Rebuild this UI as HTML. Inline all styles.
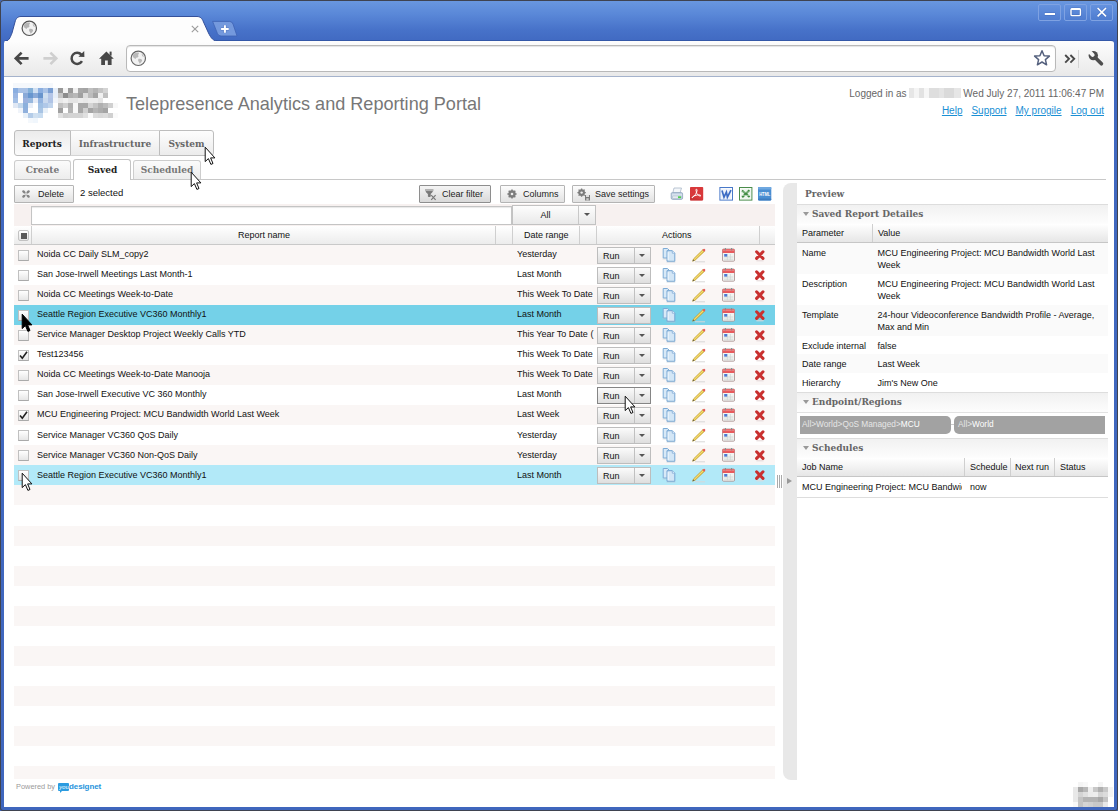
<!DOCTYPE html>
<html><head><meta charset="utf-8"><title>Telepresence Analytics and Reporting Portal</title>
<style>
*{box-sizing:border-box;margin:0;padding:0}
html,body{width:1118px;height:811px;overflow:hidden;background:#3f66bd}
body{position:relative;font:9px "Liberation Sans",sans-serif;color:#111}
#frame *{position:absolute}
#frame svg *{position:static}
#frame{position:absolute;left:0;top:0;width:1118px;height:811px;border-radius:4px 4px 3px 3px;
 background:linear-gradient(#6a98e0 0,#5a88d8 14px,#4772c9 30px,#4069c1 42px,#3f66bd 100%);
 box-shadow:inset 0 0 0 1px #3f4350;overflow:hidden}
#white{left:4px;top:77px;width:1110px;height:730px;background:#fff}
#page{left:0;top:0;width:1118px;height:811px}
#tb{left:4px;top:40px;width:1110px;height:37px;background:linear-gradient(#fdfdfd,#e9e9e9);border-bottom:1px solid #a5b3cc;border-top:1px solid #3458a8;border-radius:3px 3px 0 0}
#tab{left:4px;top:16px;width:214px;height:26px}
#omni{left:122px;top:4px;width:930px;height:27px;border:1px solid #b9b9b9;border-radius:4px;background:#fff;box-shadow:inset 0 1px 1px #e4e4e4}
.wb{top:4px;width:23px;height:17px;border:1px solid #7fa2e2;border-radius:2px;background:linear-gradient(#6592de,#4f7cd0)}
/* header */
#title{left:126px;top:94px;font-size:18.1px;line-height:21px;color:#777;white-space:nowrap}
#login{right:14px;top:88px;font-size:10px;line-height:12px;color:#666;white-space:nowrap}
#links{right:14px;top:105px;font-size:10px;line-height:12px;white-space:nowrap}
#links a{position:static;color:#1a8fd4;text-decoration:underline;margin-left:9px}
.blur{position:static!important;display:inline-block;width:52px;height:10px;background:linear-gradient(90deg,#e6e6e6 0 5px,#f4f4f4 5px 10px,#e2e2e2 10px 15px,#f6f6f6 15px 20px,#dedede 20px 30px,#e4e4e4 30px 35px,#dadada 35px 45px,#e6e6e6 45px 52px);vertical-align:-1px;margin:0 2px 0 0}
/* tabs */
.mt{top:130px;height:26px;border:1px solid #bdbdbd;background:linear-gradient(#fdfdfd,#ececec);font:bold 10px "DejaVu Serif Condensed","DejaVu Serif","Liberation Serif",serif;color:#666;text-align:center;line-height:25px}
.st{top:160px;height:20px;border:1px solid #cdcdcd;border-bottom:0;background:linear-gradient(#fbfbfb,#ececec);font:bold 10px "DejaVu Serif Condensed","DejaVu Serif","Liberation Serif",serif;color:#777;text-align:center;line-height:18px;border-radius:3px 3px 0 0}
#hr{left:14px;top:179px;width:1092px;height:1px;background:#c8c8c8}
.btn{top:185px;height:18px;border:1px solid #b4b4b4;background:linear-gradient(#fcfcfc,#e2e2e2);font-size:9px;line-height:16px;color:#222;white-space:nowrap;border-radius:1px}
/* grid */
#filter{left:14px;top:204px;width:761px;height:22px;background:#f7f1f0}
#finput{left:31px;top:206px;width:481px;height:19px;background:#fff;border:1px solid #c4c4c4;box-shadow:inset 0 1px 1px #e8e8e8}
#fsel{left:512px;top:205px;width:84px;height:20px;border:1px solid #c2c2c2;background:linear-gradient(#fdfdfd,#e9e9e9);text-align:center;line-height:19px;padding-right:17px}
#ghead{left:14px;top:226px;width:761px;height:19px;background:linear-gradient(#fff,#ececec);border-bottom:1px solid #c9c9c9}
#ghead span{top:0;line-height:18px;white-space:nowrap}
#ghead i{top:0;width:1px;height:18px;background:#cfcfcf}
.r{left:14px;width:761px;height:20px;background:#fff}
.r.o{background:#faf6f5}
.r.h1{background:#74d1e8}
.r.h2{background:#b2e9f8}
.cb{left:4px;top:5px;width:11px;height:11px;border:1px solid #c0c0c0;border-bottom-color:#aaa;background:linear-gradient(#fff,#e6e6e6)}
.cb svg{left:-1px;top:-1px;width:11px;height:11px}
.nm{left:23px;top:0;line-height:19px;white-space:nowrap}
.dr{left:503px;top:0;line-height:19px;white-space:nowrap;width:77px;overflow:hidden}
.run{left:583px;top:2px;width:54px;height:17px;border:1px solid #bdbdbd;background:linear-gradient(#fbfbfb,#dedede);}
.run.hv{border-color:#858585}
.run b{font-weight:normal;left:5px;top:0;line-height:16px}
.run u{left:36px;top:0;width:1px;height:15px;background:#c0c0c0}
.run u:after{content:"";position:absolute;left:5px;top:6px;border:3px solid transparent;border-top:3.5px solid #555;border-bottom:0}
.ic{top:3px}
/* panel */
#pbar{left:783px;top:183px;width:13.5px;height:597px;background:#e8e8e8;border-radius:8px 0 0 8px}
#panel{left:797px;top:183px;width:309px;height:597px;background:#fff}
#panel{left:797px;top:183px;width:311px;height:597px;background:#fff}
#ptitle{left:805px;top:187px;font:bold 10px "DejaVu Serif Condensed","Liberation Serif",serif;color:#666;line-height:14px}
.sh{left:797px;width:311px;height:21px;border-top:1px solid #ddd;border-bottom:1px solid #e2e2e2;background:linear-gradient(#f1f1f1,#fdfdfd);font:bold 10px "DejaVu Serif Condensed","Liberation Serif",serif;color:#666;line-height:18px;padding-left:15px;white-space:nowrap}
.sh:before{content:"";position:absolute;left:6px;top:7px;border:3px solid transparent;border-top:4.5px solid #999;border-bottom:0}
.th{left:797px;width:311px;height:19px;background:linear-gradient(#fff,#e6e6e6);border-bottom:1px solid #c6c6c6}
.th span{top:0;line-height:18px;white-space:nowrap}
.th i{top:0;width:1px;height:18px;background:#cfcfcf}
.pr{left:797px;width:311px;background:#fff;line-height:12px}
.pr.g{background:#fafafa}
.pr span{top:3.5px;white-space:nowrap}
.pr span.k{left:5px}
.pr span.v{left:80.5px}
.pill{top:416px;height:18px;background:#a2a2a2;color:#e6e6e6;line-height:17px;font-size:8.3px;white-space:nowrap;padding-left:2px}
.pill b{position:static!important;font-weight:normal;color:#fff}

</style></head><body>
<div id="frame">
 <div class="wb" style="left:1038px"><svg width="21" height="15" viewBox="0 0 21 15" style="left:0;top:0"><path d="M5.6 9 H16.2" stroke="#3558a6" stroke-width="3.4" opacity=".35"/><path d="M5.8 9 H16" stroke="#fff" stroke-width="2"/></svg></div>
 <div class="wb" style="left:1064px"><svg width="21" height="15" viewBox="0 0 21 15" style="left:0;top:0"><rect x="6" y="3.6" width="9.4" height="7" rx="1.2" fill="none" stroke="#3558a6" stroke-width="2.8" opacity=".3"/><rect x="6" y="3.6" width="9.4" height="7" rx="1.2" fill="none" stroke="#fff" stroke-width="1.4"/><path d="M6 4.2 H15.4" stroke="#fff" stroke-width="1.6"/></svg></div>
 <div class="wb" style="left:1090px"><svg width="21" height="15" viewBox="0 0 21 15" style="left:0;top:0"><path d="M6.6 3 L15 11.4 M15 3 L6.6 11.4" stroke="#3558a6" stroke-width="3" opacity=".3"/><path d="M6.6 3 L15 11.4 M15 3 L6.6 11.4" stroke="#fff" stroke-width="1.6"/></svg></div>
 <svg class="abs" style="left:211px;top:20px" width="28" height="17" viewBox="0 0 28 17"><path d="M1.6 1.4 H18.5 Q21 1.4 22 4 L26 16 H10 Q7.4 16 6.4 13.4 Z" fill="#7499dd" stroke="#3f63b4" stroke-width="0.8"/><path d="M13.9 5 V13 M9.9 9 H17.9" stroke="#3a5ca8" stroke-width="3" opacity=".5"/><path d="M13.9 5.2 V12.8 M10.1 9 H17.7" stroke="#fff" stroke-width="2"/></svg>
 <div id="tb"><div id="omni"></div></div>
 <svg id="tab" viewBox="0 0 214 26"><path d="M0 26 C5 25 6 22 8 17 L11 6 C12 2 14 0.5 17 0.5 L193 0.5 C196 .5 198 2 199.5 6 L204.5 17 C207 22 209 25 214.5 25.5 L214.5 26 Z" fill="#fdfdfd" stroke="#34509a" stroke-width="1"/><rect x="0.5" y="25" width="214" height="2" fill="#fdfdfd"/></svg>
 <svg class="abs" style="left:191px;top:25px" width="8" height="8" viewBox="0 0 8 8"><path d="M0.8 0.8 L7.2 7.2 M7.2 0.8 L0.8 7.2" stroke="#9c9c9c" stroke-width="1.1"/></svg>
 <svg class="abs globe" style="left:21px;top:20px" width="17" height="17" viewBox="0 0 17 17"><circle cx="8.3" cy="8.3" r="7.2" fill="#f2f2f2" stroke="#555" stroke-width="1.2"/><path d="M4 3.6 Q6 2.4 8.6 2.6 Q9.6 4 8 5 Q9.4 6.4 7.6 7.6 Q6 7.4 5.6 9 Q3.6 8.6 2.6 6.6 Q2.8 4.6 4 3.6 Z M8.6 8.8 Q10.8 8.4 12.2 10 Q11.8 12.6 9.6 13.8 Q9.2 12 8.2 11 Q7.8 9.6 8.6 8.8 Z M11.6 3.6 Q13.4 4.8 14 6.8 Q12.6 7 12 5.6 Z" fill="#b4b4b4"/></svg>
 <svg class="abs globe" style="left:130px;top:50px" width="17" height="17" viewBox="0 0 17 17"><circle cx="8.3" cy="8.3" r="7.2" fill="#f2f2f2" stroke="#666" stroke-width="1.2"/><path d="M4 3.6 Q6 2.4 8.6 2.6 Q9.6 4 8 5 Q9.4 6.4 7.6 7.6 Q6 7.4 5.6 9 Q3.6 8.6 2.6 6.6 Q2.8 4.6 4 3.6 Z M8.6 8.8 Q10.8 8.4 12.2 10 Q11.8 12.6 9.6 13.8 Q9.2 12 8.2 11 Q7.8 9.6 8.6 8.8 Z M11.6 3.6 Q13.4 4.8 14 6.8 Q12.6 7 12 5.6 Z" fill="#b9b9b9"/></svg>
 <svg class="abs" style="left:14px;top:51px" width="16" height="15" viewBox="0 0 16 15"><path d="M7.6 1.6 L1.8 7.4 L7.6 13.2 M2.4 7.4 H14.6" fill="none" stroke="#484848" stroke-width="2.6" stroke-linejoin="miter"/></svg>
 <svg class="abs" style="left:42px;top:51px" width="16" height="15" viewBox="0 0 16 15"><path d="M8.4 1.6 L14.2 7.4 L8.4 13.2 M13.6 7.4 H1.4" fill="none" stroke="#cfcfcf" stroke-width="2.6"/></svg>
 <svg class="abs" style="left:69px;top:50px" width="17" height="17" viewBox="0 0 17 17"><path d="M13 11.2 A5.6 5.6 0 1 1 12.4 4.6" fill="none" stroke="#484848" stroke-width="2.5"/><path d="M9.4 6.8 L15.4 7 L15.2 1 Z" fill="#484848"/></svg>
 <svg class="abs" style="left:98px;top:50px" width="17" height="16" viewBox="0 0 17 16"><path d="M8.4 1.4 L1 8.8 H3.2 V15 H7 V10.4 H9.8 V15 H13.6 V8.8 H15.8 Z" fill="#484848"/><rect x="11.6" y="1.6" width="2" height="4" fill="#484848"/></svg>
 <svg class="abs" style="left:1033px;top:49px" width="18" height="18" viewBox="0 0 18 18"><path d="M9 1.8 L11.1 6.7 L16.4 7.1 L12.4 10.6 L13.6 15.8 L9 13 L4.4 15.8 L5.6 10.6 L1.6 7.1 L6.9 6.7 Z" fill="#fff" stroke="#55617e" stroke-width="1.5" stroke-linejoin="round"/></svg>
 <svg class="abs" style="left:1064px;top:54px" width="12" height="10" viewBox="0 0 12 10"><path d="M1.2 1 L5 4.8 L1.2 8.6 M6.4 1 L10.2 4.8 L6.4 8.6" fill="none" stroke="#484848" stroke-width="1.9"/></svg>
 <div class="abs" style="left:1078px;top:50px;width:1px;height:18px;background:#d4d4d4"></div>
 <svg class="abs" style="left:1086px;top:50px" width="19" height="18" viewBox="0 0 19 18"><path d="M15.4 13.8 L8.6 7" stroke="#4e4e4e" stroke-width="3.7" stroke-linecap="round"/><circle cx="7.3" cy="5.6" r="4.7" fill="#4e4e4e"/><path d="M-1 -3 L6.6 4.9" stroke="#f7f7f7" stroke-width="3.8" stroke-linecap="round"/></svg>
 <div id="white"></div>

<div id="page">
<svg class="abs" style="left:13px;top:83px" width="105" height="40" viewBox="0 0 105 40" shape-rendering="crispEdges"><rect x="0" y="0" width="5" height="5" fill="#f5f8fc"/><rect x="5" y="0" width="5" height="5" fill="#f5f8fc"/><rect x="10" y="0" width="5" height="5" fill="#f5f8fc"/><rect x="15" y="0" width="5" height="5" fill="#f5f8fc"/><rect x="20" y="0" width="5" height="5" fill="#f5f8fc"/><rect x="25" y="0" width="5" height="5" fill="#f5f8fc"/><rect x="30" y="0" width="5" height="5" fill="#f5f8fc"/><rect x="35" y="0" width="5" height="5" fill="#f5f8fc"/><rect x="0" y="5" width="5" height="5" fill="#8aaee0"/><rect x="5" y="5" width="5" height="5" fill="#a9c2e6"/><rect x="10" y="5" width="5" height="5" fill="#a9c2e6"/><rect x="15" y="5" width="5" height="5" fill="#84b0d8"/><rect x="20" y="5" width="5" height="5" fill="#cfdff2"/><rect x="25" y="5" width="5" height="5" fill="#8aaee0"/><rect x="30" y="5" width="5" height="5" fill="#a9c2e6"/><rect x="35" y="5" width="5" height="5" fill="#7a9fd3"/><rect x="40" y="5" width="5" height="5" fill="#e6eef8"/><rect x="45" y="5" width="5" height="5" fill="#989898"/><rect x="50" y="5" width="5" height="5" fill="#f4f4f4"/><rect x="55" y="5" width="5" height="5" fill="#9a9a9a"/><rect x="60" y="5" width="5" height="5" fill="#f0f0f0"/><rect x="65" y="5" width="5" height="5" fill="#a8a8a8"/><rect x="70" y="5" width="5" height="5" fill="#a4a4a4"/><rect x="75" y="5" width="5" height="5" fill="#c0c0c0"/><rect x="80" y="5" width="5" height="5" fill="#b4b4b4"/><rect x="85" y="5" width="5" height="5" fill="#c4c4c4"/><rect x="90" y="5" width="5" height="5" fill="#d4d4d4"/><rect x="0" y="10" width="5" height="5" fill="#9ab6e2"/><rect x="10" y="10" width="5" height="5" fill="#8aaad8"/><rect x="15" y="10" width="5" height="5" fill="#6896cf"/><rect x="20" y="10" width="5" height="5" fill="#8aaad8"/><rect x="25" y="10" width="5" height="5" fill="#6894cc"/><rect x="30" y="10" width="5" height="5" fill="#cfdff0"/><rect x="35" y="10" width="5" height="5" fill="#b4c6e8"/><rect x="40" y="10" width="5" height="5" fill="#e6eef8"/><rect x="45" y="10" width="5" height="5" fill="#c4c4c4"/><rect x="50" y="10" width="5" height="5" fill="#8c8c8c"/><rect x="55" y="10" width="5" height="5" fill="#b0b0b0"/><rect x="60" y="10" width="5" height="5" fill="#b8b8b8"/><rect x="65" y="10" width="5" height="5" fill="#a0a0a0"/><rect x="70" y="10" width="5" height="5" fill="#dcdcdc"/><rect x="75" y="10" width="5" height="5" fill="#bcbcbc"/><rect x="80" y="10" width="5" height="5" fill="#a4a4a4"/><rect x="85" y="10" width="5" height="5" fill="#f0f0f0"/><rect x="90" y="10" width="5" height="5" fill="#c0c0c0"/><rect x="0" y="15" width="5" height="5" fill="#a4c0e6"/><rect x="10" y="15" width="5" height="5" fill="#9cb2de"/><rect x="15" y="15" width="5" height="5" fill="#98b8de"/><rect x="20" y="15" width="5" height="5" fill="#e4eaf6"/><rect x="25" y="15" width="5" height="5" fill="#94b4e0"/><rect x="30" y="15" width="5" height="5" fill="#c8d8ee"/><rect x="35" y="15" width="5" height="5" fill="#b0c4e6"/><rect x="40" y="15" width="5" height="5" fill="#f0f4fa"/><rect x="45" y="15" width="5" height="5" fill="#e8e8e8"/><rect x="50" y="15" width="5" height="5" fill="#f0f0f0"/><rect x="55" y="15" width="5" height="5" fill="#e4e4e4"/><rect x="60" y="15" width="5" height="5" fill="#e4e4e4"/><rect x="65" y="15" width="5" height="5" fill="#ececec"/><rect x="70" y="15" width="5" height="5" fill="#e8e8e8"/><rect x="75" y="15" width="5" height="5" fill="#ececec"/><rect x="80" y="15" width="5" height="5" fill="#ececec"/><rect x="85" y="15" width="5" height="5" fill="#e4e4e4"/><rect x="0" y="20" width="5" height="5" fill="#e0e8f4"/><rect x="5" y="20" width="5" height="5" fill="#c4d8ec"/><rect x="10" y="20" width="5" height="5" fill="#8cb0dc"/><rect x="15" y="20" width="5" height="5" fill="#e8eef8"/><rect x="25" y="20" width="5" height="5" fill="#a0c0e4"/><rect x="30" y="20" width="5" height="5" fill="#b0c8e8"/><rect x="35" y="20" width="5" height="5" fill="#c0d4ec"/><rect x="45" y="20" width="5" height="5" fill="#c0c0c0"/><rect x="50" y="20" width="5" height="5" fill="#d0d0d0"/><rect x="55" y="20" width="5" height="5" fill="#b0b0b0"/><rect x="60" y="20" width="5" height="5" fill="#f8f8f8"/><rect x="65" y="20" width="5" height="5" fill="#a8a8a8"/><rect x="70" y="20" width="5" height="5" fill="#a8a8a8"/><rect x="75" y="20" width="5" height="5" fill="#d4d4d4"/><rect x="80" y="20" width="5" height="5" fill="#c4c4c4"/><rect x="85" y="20" width="5" height="5" fill="#b0b0b0"/><rect x="90" y="20" width="5" height="5" fill="#bcbcbc"/><rect x="95" y="20" width="5" height="5" fill="#d0d0d0"/><rect x="100" y="20" width="5" height="5" fill="#f8f8f8"/><rect x="5" y="25" width="5" height="5" fill="#f0f4fa"/><rect x="10" y="25" width="5" height="5" fill="#90b0dc"/><rect x="25" y="25" width="5" height="5" fill="#a8c4e4"/><rect x="30" y="25" width="5" height="5" fill="#e8f0f8"/><rect x="45" y="25" width="5" height="5" fill="#a0a0a0"/><rect x="55" y="25" width="5" height="5" fill="#b4b4b4"/><rect x="60" y="25" width="5" height="5" fill="#f8f8f8"/><rect x="65" y="25" width="5" height="5" fill="#a8a8a8"/><rect x="70" y="25" width="5" height="5" fill="#d0d0d0"/><rect x="75" y="25" width="5" height="5" fill="#a4a4a4"/><rect x="80" y="25" width="5" height="5" fill="#b4b4b4"/><rect x="85" y="25" width="5" height="5" fill="#acacac"/><rect x="90" y="25" width="5" height="5" fill="#a4a4a4"/><rect x="10" y="30" width="5" height="5" fill="#e8f0f8"/><rect x="15" y="30" width="5" height="5" fill="#b4cce8"/><rect x="20" y="30" width="5" height="5" fill="#d0e0f0"/><rect x="25" y="30" width="5" height="5" fill="#c8dcf0"/><rect x="45" y="30" width="5" height="5" fill="#e0e0e0"/><rect x="50" y="30" width="5" height="5" fill="#d0d0d0"/><rect x="55" y="30" width="5" height="5" fill="#d4d4d4"/><rect x="60" y="30" width="5" height="5" fill="#d4d4d4"/><rect x="65" y="30" width="5" height="5" fill="#d4d4d4"/><rect x="70" y="30" width="5" height="5" fill="#e0e0e0"/><rect x="75" y="30" width="5" height="5" fill="#fafafa"/><rect x="80" y="30" width="5" height="5" fill="#dcdcdc"/><rect x="85" y="30" width="5" height="5" fill="#d8d8d8"/><rect x="90" y="30" width="5" height="5" fill="#dcdcdc"/><rect x="95" y="30" width="5" height="5" fill="#d0d0d0"/><rect x="100" y="30" width="5" height="5" fill="#fafafa"/><rect x="15" y="35" width="5" height="5" fill="#f4f8fc"/><rect x="20" y="35" width="5" height="5" fill="#f0f6fc"/></svg>
<div id="title">Telepresence Analytics and Reporting Portal</div>
<div id="login">Logged in as <span class="blur"></span>Wed July 27, 2011 11:06:47 PM</div>
<div id="links"><a>Help</a><a>Support</a><a>My progile</a><a>Log out</a></div>
<div class="mt" style="left:14px;width:57px;border-radius:3px 0 0 3px;color:#222;background:linear-gradient(#ebebeb,#fbfbfb);text-indent:-1px">Reports</div>
<div class="mt" style="left:71px;width:88px;border-left:0;border-right:0;border-color:#d4d4d4">Infrastructure</div>
<div class="mt" style="left:159px;width:55px;border-radius:0 3px 3px 0">System</div>
<div class="st" style="left:14px;width:57px">Create</div>
<div class="st" style="left:133px;width:68px">Scheduled</div>
<div id="hr"></div>
<div class="st" style="left:73px;width:58px;height:21px;background:#fff;color:#222;padding-left:1px;top:159px;line-height:20px;border-color:#c4c4c4">Saved</div>
<div class="btn" style="left:14px;width:60px;padding-left:23px">Delete</div>
<div class="abs" style="left:80px;top:187px;line-height:11px;font-size:9.5px">2 selected</div>
<div class="btn" style="left:419px;width:72px;padding-left:22px;border-color:#8e8e8e;background:linear-gradient(#f4f4f4,#d9d9d9)">Clear filter</div>
<div class="btn" style="left:500px;width:65px;padding-left:22px">Columns</div>
<div class="btn" style="left:572px;width:83px;padding-left:22px">Save settings</div>
<div id="filter"></div><div id="finput"></div><div id="fsel">All</div>
<div id="ghead"><span style="left:224px">Report name</span><span style="left:510px">Date range</span><span style="left:648px">Actions</span>
<i style="left:17px"></i><i style="left:481px"></i><i style="left:498px"></i><i style="left:565px"></i><i style="left:582px"></i><i style="left:745px"></i></div>
<svg class="abs" style="left:424px;top:189px" width="14" height="12" viewBox="0 0 14 12"><path d="M1 1 H9.5 M2 2.6 H8.5 L6.2 5 V7.5 H4.4 V5 Z" fill="#787878" stroke="#787878" stroke-width="1"/><path d="M7.2 6.2 L11.6 10.8 M11.6 6.2 L7.2 10.8" stroke="#787878" stroke-width="1.2"/></svg>
<svg class="abs" style="left:507px;top:189px" width="10" height="10" viewBox="0 0 10 10"><circle cx="5" cy="5" r="2.7" fill="none" stroke="#7c7c7c" stroke-width="2"/><path d="M5 0.4 V9.6 M0.4 5 H9.6 M1.7 1.7 L8.3 8.3 M8.3 1.7 L1.7 8.3" stroke="#7c7c7c" stroke-width="1.5"/><circle cx="5" cy="5" r="1.3" fill="#eee"/></svg>
<svg class="abs" style="left:577px;top:188px" width="14" height="13" viewBox="0 0 14 13"><circle cx="4.6" cy="4.6" r="2.5" fill="none" stroke="#7c7c7c" stroke-width="1.8"/><path d="M4.6 0.4 V8.8 M0.4 4.6 H8.8 M1.6 1.6 L7.6 7.6 M7.6 1.6 L1.6 7.6" stroke="#7c7c7c" stroke-width="1.3"/><circle cx="4.6" cy="4.6" r="1.2" fill="#eee"/><rect x="8" y="7" width="5" height="5.5" fill="#7a7a7a"/><rect x="9" y="7" width="3" height="2" fill="#ddd"/><rect x="9.3" y="10.2" width="2.4" height="2.3" fill="#ccc"/></svg>
<svg class="abs" style="left:670px;top:187px" width="14" height="14" viewBox="0 0 14 14"><path d="M4 1 H11.5 L10 6 H2.8 Z" fill="#f4f7fa" stroke="#aab8c8" stroke-width="0.8"/><path d="M1.2 6.6 Q1.2 5.6 2.4 5.6 H11.2 Q12.6 5.6 12.6 6.8 V11 Q12.6 12.4 11.2 12.4 H2.6 Q1.2 12.4 1.2 11 Z" fill="#c3d3e4" stroke="#8ea4bc" stroke-width="0.8"/><path d="M2 8 H12" stroke="#e8eff6" stroke-width="1"/><rect x="2.4" y="9" width="9" height="2.4" rx="0.6" fill="#e9eef3" stroke="#9fb0c2" stroke-width="0.5"/><rect x="8" y="9.3" width="3" height="1.8" fill="#4fd04f"/></svg>
<svg class="abs" style="left:690px;top:187px" width="14" height="14" viewBox="0 0 14 14"><rect x="0" y="0" width="13.2" height="13.4" rx="0.8" fill="#d8383a"/><path d="M0 9 L13.2 13.4 H0 Z" fill="#c22f31" opacity=".6"/><path d="M6.3 2.2 Q7.4 2 7 4 Q6.4 7.2 2.6 10.6 Q1.6 11.4 2.2 10.2 Q3.4 8.6 7.2 8 Q10.8 7.6 10.9 8.6 Q10.6 9.6 8.8 8.6 Q6.4 7 6 3.4 Q5.9 2.3 6.3 2.2" fill="none" stroke="#fff" stroke-width="0.9"/></svg>
<svg class="abs" style="left:719px;top:187px" width="15" height="14" viewBox="0 0 15 14"><rect x="0.9" y="0.5" width="12.6" height="12.6" fill="#fff" stroke="#4878c8" stroke-width="1"/><rect x="2" y="1.6" width="10.4" height="10.4" fill="#eef3fb"/><path d="M3 3.6 L5 10.2 L7.4 5.2 L8.4 10.2 L12 3.2" fill="none" stroke="#3c6cc4" stroke-width="1.7"/></svg>
<svg class="abs" style="left:739px;top:187px" width="14" height="14" viewBox="0 0 14 14"><rect x="0.5" y="0.5" width="12.4" height="12.6" fill="#fff" stroke="#4a8c4a" stroke-width="1"/><rect x="1.6" y="1.6" width="10.2" height="10.4" fill="#eef6ee"/><path d="M3 3.4 L10.6 10 M10.4 3.2 L3.2 10.2" fill="none" stroke="#3e8a40" stroke-width="2"/><path d="M2.4 5 H11.2 M2.4 8.4 H11.2" stroke="#cfe4cf" stroke-width="0.7"/></svg>
<svg class="abs" style="left:758px;top:187px" width="14" height="14" viewBox="0 0 14 14"><rect x="0" y="0" width="13.3" height="13.4" rx="0.8" fill="#4a8ed2"/><rect x="0" y="0" width="13.3" height="2.4" rx="0.8" fill="#6fa8e0"/><rect x="0" y="11.4" width="13.3" height="2" rx="0.8" fill="#3d7cc0"/><text x="6.65" y="8.9" font-family="Liberation Sans, sans-serif" font-size="4.6" font-weight="bold" fill="#fff" text-anchor="middle" textLength="11" lengthAdjust="spacingAndGlyphs">HTML</text></svg>
<svg class="abs" style="left:21.5px;top:189.5px" width="8" height="8" viewBox="0 0 8 8"><path d="M1.4 1.4 L6.6 6.6 M6.6 1.4 L1.4 6.6" stroke="#848484" stroke-width="2.3" stroke-linecap="round"/><path d="M4 0.4 V7.6 M0.4 4 H7.6" stroke="#ececec" stroke-width="0.9"/></svg>
<div class="abs" style="left:18px;top:230px;width:11px;height:11px;border:1px solid #c2c2c2;border-radius:2px;background:linear-gradient(#fff,#e4e4e4)"></div><div class="abs" style="left:20.5px;top:232.5px;width:6px;height:6px;background:#585858"></div>
<div class="abs" style="left:578px;top:206px;width:1px;height:18px;background:#c8c8c8"></div><div class="abs" style="left:583.5px;top:213px;border:3px solid transparent;border-top:3.5px solid #555;border-bottom:0"></div>

<div id="grid">
<div class="r o" style="top:245px;height:20px"><i class="cb"></i><span class="nm">Noida CC Daily SLM_copy2</span><span class="dr">Yesterday</span><span class="run"><b>Run</b><u></u></span><svg class="ic" style="left:648px;top:3px" width="14" height="15" viewBox="0 0 14 15"><path d="M1.2 0.5 H5.5 L7.2 2.2 V10 H1.2 Z" fill="#d8e9f7" stroke="#7dabd6" stroke-width="1"/><path d="M5 2.7 H10.3 L12.8 5.2 V13.3 H5 Z" fill="#d3e6f6" stroke="#74a4d2" stroke-width="1"/><path d="M10.3 2.7 V5.2 H12.8" fill="#f2f8fd" stroke="#74a4d2" stroke-width="0.7"/><path d="M6.2 4.2 V12" stroke="#f2f8fd" stroke-width="1"/><path d="M0.5 10.9 H4.4 M4.6 14.1 H13.2" stroke="#b9c7d4" stroke-width="0.8" opacity=".7"/></svg><svg class="ic" style="left:678px;top:3px" width="15" height="15" viewBox="0 0 15 15"><path d="M3 13.8 H13" stroke="#d8d8d8" stroke-width="1"/><path d="M0.6 13.2 L1.5 10.9 L11 1.6 L12.6 3.2 L3 12.3 Z" fill="#ecc94a" stroke="#b8982e" stroke-width="0.7"/><path d="M2.3 11.4 L11.6 2.3" stroke="#f8e690" stroke-width="0.7"/><path d="M10.5 2.1 L11.5 1.1 Q12.3 0.5 13 1.2 Q13.7 2 13.1 2.7 L12.1 3.7 Z" fill="#e45a5a"/><path d="M0.6 13.2 L1.3 11.4 L2.4 12.5 Z" fill="#555"/></svg><svg class="ic" style="left:708px;top:3px" width="14" height="15" viewBox="0 0 14 15"><rect x="0.5" y="1" width="12" height="12.2" rx="1" fill="#f1f3f1" stroke="#a58a8a" stroke-width="0.8"/><path d="M0.5 5 V2 Q0.5 1 1.5 1 H11.5 Q12.5 1 12.5 2 V5 Z" fill="#e85a5c"/><path d="M1 2.2 H12" stroke="#f59a9a" stroke-width="0.8"/><path d="M3.4 0 V2.6 M9.6 0 V2.6" stroke="#8c8c8c" stroke-width="1.1"/><path d="M2 9 H11.2 M2 11.2 H11.2 M5.4 6 V12.4 M8.4 6 V12.4" stroke="#cfd8d4" stroke-width="0.8"/><rect x="2.2" y="6" width="3" height="2.6" fill="#4c7ad6"/></svg><svg class="ic" style="left:740px;top:3px" width="12" height="15" viewBox="0 0 12 15"><path d="M2.4 12.8 H9.6" stroke="#e4d6d6" stroke-width="1"/><path d="M2.6 3.8 L9 10.4 M9 3.8 L2.6 10.4" stroke="#c9302f" stroke-width="3" stroke-linecap="round"/></svg></div>
<div class="r" style="top:265px;height:20px"><i class="cb"></i><span class="nm">San Jose-Irwell Meetings Last Month-1</span><span class="dr">Last Month</span><span class="run"><b>Run</b><u></u></span><svg class="ic" style="left:648px;top:3px" width="14" height="15" viewBox="0 0 14 15"><path d="M1.2 0.5 H5.5 L7.2 2.2 V10 H1.2 Z" fill="#d8e9f7" stroke="#7dabd6" stroke-width="1"/><path d="M5 2.7 H10.3 L12.8 5.2 V13.3 H5 Z" fill="#d3e6f6" stroke="#74a4d2" stroke-width="1"/><path d="M10.3 2.7 V5.2 H12.8" fill="#f2f8fd" stroke="#74a4d2" stroke-width="0.7"/><path d="M6.2 4.2 V12" stroke="#f2f8fd" stroke-width="1"/><path d="M0.5 10.9 H4.4 M4.6 14.1 H13.2" stroke="#b9c7d4" stroke-width="0.8" opacity=".7"/></svg><svg class="ic" style="left:678px;top:3px" width="15" height="15" viewBox="0 0 15 15"><path d="M3 13.8 H13" stroke="#d8d8d8" stroke-width="1"/><path d="M0.6 13.2 L1.5 10.9 L11 1.6 L12.6 3.2 L3 12.3 Z" fill="#ecc94a" stroke="#b8982e" stroke-width="0.7"/><path d="M2.3 11.4 L11.6 2.3" stroke="#f8e690" stroke-width="0.7"/><path d="M10.5 2.1 L11.5 1.1 Q12.3 0.5 13 1.2 Q13.7 2 13.1 2.7 L12.1 3.7 Z" fill="#e45a5a"/><path d="M0.6 13.2 L1.3 11.4 L2.4 12.5 Z" fill="#555"/></svg><svg class="ic" style="left:708px;top:3px" width="14" height="15" viewBox="0 0 14 15"><rect x="0.5" y="1" width="12" height="12.2" rx="1" fill="#f1f3f1" stroke="#a58a8a" stroke-width="0.8"/><path d="M0.5 5 V2 Q0.5 1 1.5 1 H11.5 Q12.5 1 12.5 2 V5 Z" fill="#e85a5c"/><path d="M1 2.2 H12" stroke="#f59a9a" stroke-width="0.8"/><path d="M3.4 0 V2.6 M9.6 0 V2.6" stroke="#8c8c8c" stroke-width="1.1"/><path d="M2 9 H11.2 M2 11.2 H11.2 M5.4 6 V12.4 M8.4 6 V12.4" stroke="#cfd8d4" stroke-width="0.8"/><rect x="2.2" y="6" width="3" height="2.6" fill="#4c7ad6"/></svg><svg class="ic" style="left:740px;top:3px" width="12" height="15" viewBox="0 0 12 15"><path d="M2.4 12.8 H9.6" stroke="#e4d6d6" stroke-width="1"/><path d="M2.6 3.8 L9 10.4 M9 3.8 L2.6 10.4" stroke="#c9302f" stroke-width="3" stroke-linecap="round"/></svg></div>
<div class="r o" style="top:285px;height:20px"><i class="cb"></i><span class="nm">Noida CC Meetings Week-to-Date</span><span class="dr">This Week To Date</span><span class="run"><b>Run</b><u></u></span><svg class="ic" style="left:648px;top:3px" width="14" height="15" viewBox="0 0 14 15"><path d="M1.2 0.5 H5.5 L7.2 2.2 V10 H1.2 Z" fill="#d8e9f7" stroke="#7dabd6" stroke-width="1"/><path d="M5 2.7 H10.3 L12.8 5.2 V13.3 H5 Z" fill="#d3e6f6" stroke="#74a4d2" stroke-width="1"/><path d="M10.3 2.7 V5.2 H12.8" fill="#f2f8fd" stroke="#74a4d2" stroke-width="0.7"/><path d="M6.2 4.2 V12" stroke="#f2f8fd" stroke-width="1"/><path d="M0.5 10.9 H4.4 M4.6 14.1 H13.2" stroke="#b9c7d4" stroke-width="0.8" opacity=".7"/></svg><svg class="ic" style="left:678px;top:3px" width="15" height="15" viewBox="0 0 15 15"><path d="M3 13.8 H13" stroke="#d8d8d8" stroke-width="1"/><path d="M0.6 13.2 L1.5 10.9 L11 1.6 L12.6 3.2 L3 12.3 Z" fill="#ecc94a" stroke="#b8982e" stroke-width="0.7"/><path d="M2.3 11.4 L11.6 2.3" stroke="#f8e690" stroke-width="0.7"/><path d="M10.5 2.1 L11.5 1.1 Q12.3 0.5 13 1.2 Q13.7 2 13.1 2.7 L12.1 3.7 Z" fill="#e45a5a"/><path d="M0.6 13.2 L1.3 11.4 L2.4 12.5 Z" fill="#555"/></svg><svg class="ic" style="left:708px;top:3px" width="14" height="15" viewBox="0 0 14 15"><rect x="0.5" y="1" width="12" height="12.2" rx="1" fill="#f1f3f1" stroke="#a58a8a" stroke-width="0.8"/><path d="M0.5 5 V2 Q0.5 1 1.5 1 H11.5 Q12.5 1 12.5 2 V5 Z" fill="#e85a5c"/><path d="M1 2.2 H12" stroke="#f59a9a" stroke-width="0.8"/><path d="M3.4 0 V2.6 M9.6 0 V2.6" stroke="#8c8c8c" stroke-width="1.1"/><path d="M2 9 H11.2 M2 11.2 H11.2 M5.4 6 V12.4 M8.4 6 V12.4" stroke="#cfd8d4" stroke-width="0.8"/><rect x="2.2" y="6" width="3" height="2.6" fill="#4c7ad6"/></svg><svg class="ic" style="left:740px;top:3px" width="12" height="15" viewBox="0 0 12 15"><path d="M2.4 12.8 H9.6" stroke="#e4d6d6" stroke-width="1"/><path d="M2.6 3.8 L9 10.4 M9 3.8 L2.6 10.4" stroke="#c9302f" stroke-width="3" stroke-linecap="round"/></svg></div>
<div class="r h1" style="top:305px;height:20px"><i class="cb"></i><span class="nm">Seattle Region Executive VC360 Monthly1</span><span class="dr">Last Month</span><span class="run"><b>Run</b><u></u></span><svg class="ic" style="left:648px;top:3px" width="14" height="15" viewBox="0 0 14 15"><path d="M1.2 0.5 H5.5 L7.2 2.2 V10 H1.2 Z" fill="#d8e9f7" stroke="#7dabd6" stroke-width="1"/><path d="M5 2.7 H10.3 L12.8 5.2 V13.3 H5 Z" fill="#d3e6f6" stroke="#74a4d2" stroke-width="1"/><path d="M10.3 2.7 V5.2 H12.8" fill="#f2f8fd" stroke="#74a4d2" stroke-width="0.7"/><path d="M6.2 4.2 V12" stroke="#f2f8fd" stroke-width="1"/><path d="M0.5 10.9 H4.4 M4.6 14.1 H13.2" stroke="#b9c7d4" stroke-width="0.8" opacity=".7"/></svg><svg class="ic" style="left:678px;top:3px" width="15" height="15" viewBox="0 0 15 15"><path d="M3 13.8 H13" stroke="#d8d8d8" stroke-width="1"/><path d="M0.6 13.2 L1.5 10.9 L11 1.6 L12.6 3.2 L3 12.3 Z" fill="#ecc94a" stroke="#b8982e" stroke-width="0.7"/><path d="M2.3 11.4 L11.6 2.3" stroke="#f8e690" stroke-width="0.7"/><path d="M10.5 2.1 L11.5 1.1 Q12.3 0.5 13 1.2 Q13.7 2 13.1 2.7 L12.1 3.7 Z" fill="#e45a5a"/><path d="M0.6 13.2 L1.3 11.4 L2.4 12.5 Z" fill="#555"/></svg><svg class="ic" style="left:708px;top:3px" width="14" height="15" viewBox="0 0 14 15"><rect x="0.5" y="1" width="12" height="12.2" rx="1" fill="#f1f3f1" stroke="#a58a8a" stroke-width="0.8"/><path d="M0.5 5 V2 Q0.5 1 1.5 1 H11.5 Q12.5 1 12.5 2 V5 Z" fill="#e85a5c"/><path d="M1 2.2 H12" stroke="#f59a9a" stroke-width="0.8"/><path d="M3.4 0 V2.6 M9.6 0 V2.6" stroke="#8c8c8c" stroke-width="1.1"/><path d="M2 9 H11.2 M2 11.2 H11.2 M5.4 6 V12.4 M8.4 6 V12.4" stroke="#cfd8d4" stroke-width="0.8"/><rect x="2.2" y="6" width="3" height="2.6" fill="#4c7ad6"/></svg><svg class="ic" style="left:740px;top:3px" width="12" height="15" viewBox="0 0 12 15"><path d="M2.4 12.8 H9.6" stroke="#e4d6d6" stroke-width="1"/><path d="M2.6 3.8 L9 10.4 M9 3.8 L2.6 10.4" stroke="#c9302f" stroke-width="3" stroke-linecap="round"/></svg></div>
<div class="r o" style="top:325px;height:20px"><i class="cb"></i><span class="nm">Service Manager Desktop Project Weekly Calls YTD</span><span class="dr">This Year To Date (</span><span class="run"><b>Run</b><u></u></span><svg class="ic" style="left:648px;top:3px" width="14" height="15" viewBox="0 0 14 15"><path d="M1.2 0.5 H5.5 L7.2 2.2 V10 H1.2 Z" fill="#d8e9f7" stroke="#7dabd6" stroke-width="1"/><path d="M5 2.7 H10.3 L12.8 5.2 V13.3 H5 Z" fill="#d3e6f6" stroke="#74a4d2" stroke-width="1"/><path d="M10.3 2.7 V5.2 H12.8" fill="#f2f8fd" stroke="#74a4d2" stroke-width="0.7"/><path d="M6.2 4.2 V12" stroke="#f2f8fd" stroke-width="1"/><path d="M0.5 10.9 H4.4 M4.6 14.1 H13.2" stroke="#b9c7d4" stroke-width="0.8" opacity=".7"/></svg><svg class="ic" style="left:678px;top:3px" width="15" height="15" viewBox="0 0 15 15"><path d="M3 13.8 H13" stroke="#d8d8d8" stroke-width="1"/><path d="M0.6 13.2 L1.5 10.9 L11 1.6 L12.6 3.2 L3 12.3 Z" fill="#ecc94a" stroke="#b8982e" stroke-width="0.7"/><path d="M2.3 11.4 L11.6 2.3" stroke="#f8e690" stroke-width="0.7"/><path d="M10.5 2.1 L11.5 1.1 Q12.3 0.5 13 1.2 Q13.7 2 13.1 2.7 L12.1 3.7 Z" fill="#e45a5a"/><path d="M0.6 13.2 L1.3 11.4 L2.4 12.5 Z" fill="#555"/></svg><svg class="ic" style="left:708px;top:3px" width="14" height="15" viewBox="0 0 14 15"><rect x="0.5" y="1" width="12" height="12.2" rx="1" fill="#f1f3f1" stroke="#a58a8a" stroke-width="0.8"/><path d="M0.5 5 V2 Q0.5 1 1.5 1 H11.5 Q12.5 1 12.5 2 V5 Z" fill="#e85a5c"/><path d="M1 2.2 H12" stroke="#f59a9a" stroke-width="0.8"/><path d="M3.4 0 V2.6 M9.6 0 V2.6" stroke="#8c8c8c" stroke-width="1.1"/><path d="M2 9 H11.2 M2 11.2 H11.2 M5.4 6 V12.4 M8.4 6 V12.4" stroke="#cfd8d4" stroke-width="0.8"/><rect x="2.2" y="6" width="3" height="2.6" fill="#4c7ad6"/></svg><svg class="ic" style="left:740px;top:3px" width="12" height="15" viewBox="0 0 12 15"><path d="M2.4 12.8 H9.6" stroke="#e4d6d6" stroke-width="1"/><path d="M2.6 3.8 L9 10.4 M9 3.8 L2.6 10.4" stroke="#c9302f" stroke-width="3" stroke-linecap="round"/></svg></div>
<div class="r" style="top:345px;height:20px"><i class="cb"><svg viewBox="0 0 11 11"><path d="M2 5.5 L4.3 8.2 L9 1.8" fill="none" stroke="#222" stroke-width="1.6"/></svg></i><span class="nm">Test123456</span><span class="dr">This Week To Date</span><span class="run"><b>Run</b><u></u></span><svg class="ic" style="left:648px;top:3px" width="14" height="15" viewBox="0 0 14 15"><path d="M1.2 0.5 H5.5 L7.2 2.2 V10 H1.2 Z" fill="#d8e9f7" stroke="#7dabd6" stroke-width="1"/><path d="M5 2.7 H10.3 L12.8 5.2 V13.3 H5 Z" fill="#d3e6f6" stroke="#74a4d2" stroke-width="1"/><path d="M10.3 2.7 V5.2 H12.8" fill="#f2f8fd" stroke="#74a4d2" stroke-width="0.7"/><path d="M6.2 4.2 V12" stroke="#f2f8fd" stroke-width="1"/><path d="M0.5 10.9 H4.4 M4.6 14.1 H13.2" stroke="#b9c7d4" stroke-width="0.8" opacity=".7"/></svg><svg class="ic" style="left:678px;top:3px" width="15" height="15" viewBox="0 0 15 15"><path d="M3 13.8 H13" stroke="#d8d8d8" stroke-width="1"/><path d="M0.6 13.2 L1.5 10.9 L11 1.6 L12.6 3.2 L3 12.3 Z" fill="#ecc94a" stroke="#b8982e" stroke-width="0.7"/><path d="M2.3 11.4 L11.6 2.3" stroke="#f8e690" stroke-width="0.7"/><path d="M10.5 2.1 L11.5 1.1 Q12.3 0.5 13 1.2 Q13.7 2 13.1 2.7 L12.1 3.7 Z" fill="#e45a5a"/><path d="M0.6 13.2 L1.3 11.4 L2.4 12.5 Z" fill="#555"/></svg><svg class="ic" style="left:708px;top:3px" width="14" height="15" viewBox="0 0 14 15"><rect x="0.5" y="1" width="12" height="12.2" rx="1" fill="#f1f3f1" stroke="#a58a8a" stroke-width="0.8"/><path d="M0.5 5 V2 Q0.5 1 1.5 1 H11.5 Q12.5 1 12.5 2 V5 Z" fill="#e85a5c"/><path d="M1 2.2 H12" stroke="#f59a9a" stroke-width="0.8"/><path d="M3.4 0 V2.6 M9.6 0 V2.6" stroke="#8c8c8c" stroke-width="1.1"/><path d="M2 9 H11.2 M2 11.2 H11.2 M5.4 6 V12.4 M8.4 6 V12.4" stroke="#cfd8d4" stroke-width="0.8"/><rect x="2.2" y="6" width="3" height="2.6" fill="#4c7ad6"/></svg><svg class="ic" style="left:740px;top:3px" width="12" height="15" viewBox="0 0 12 15"><path d="M2.4 12.8 H9.6" stroke="#e4d6d6" stroke-width="1"/><path d="M2.6 3.8 L9 10.4 M9 3.8 L2.6 10.4" stroke="#c9302f" stroke-width="3" stroke-linecap="round"/></svg></div>
<div class="r o" style="top:365px;height:20px"><i class="cb"></i><span class="nm">Noida CC Meetings Week-to-Date Manooja</span><span class="dr">This Week To Date</span><span class="run"><b>Run</b><u></u></span><svg class="ic" style="left:648px;top:3px" width="14" height="15" viewBox="0 0 14 15"><path d="M1.2 0.5 H5.5 L7.2 2.2 V10 H1.2 Z" fill="#d8e9f7" stroke="#7dabd6" stroke-width="1"/><path d="M5 2.7 H10.3 L12.8 5.2 V13.3 H5 Z" fill="#d3e6f6" stroke="#74a4d2" stroke-width="1"/><path d="M10.3 2.7 V5.2 H12.8" fill="#f2f8fd" stroke="#74a4d2" stroke-width="0.7"/><path d="M6.2 4.2 V12" stroke="#f2f8fd" stroke-width="1"/><path d="M0.5 10.9 H4.4 M4.6 14.1 H13.2" stroke="#b9c7d4" stroke-width="0.8" opacity=".7"/></svg><svg class="ic" style="left:678px;top:3px" width="15" height="15" viewBox="0 0 15 15"><path d="M3 13.8 H13" stroke="#d8d8d8" stroke-width="1"/><path d="M0.6 13.2 L1.5 10.9 L11 1.6 L12.6 3.2 L3 12.3 Z" fill="#ecc94a" stroke="#b8982e" stroke-width="0.7"/><path d="M2.3 11.4 L11.6 2.3" stroke="#f8e690" stroke-width="0.7"/><path d="M10.5 2.1 L11.5 1.1 Q12.3 0.5 13 1.2 Q13.7 2 13.1 2.7 L12.1 3.7 Z" fill="#e45a5a"/><path d="M0.6 13.2 L1.3 11.4 L2.4 12.5 Z" fill="#555"/></svg><svg class="ic" style="left:708px;top:3px" width="14" height="15" viewBox="0 0 14 15"><rect x="0.5" y="1" width="12" height="12.2" rx="1" fill="#f1f3f1" stroke="#a58a8a" stroke-width="0.8"/><path d="M0.5 5 V2 Q0.5 1 1.5 1 H11.5 Q12.5 1 12.5 2 V5 Z" fill="#e85a5c"/><path d="M1 2.2 H12" stroke="#f59a9a" stroke-width="0.8"/><path d="M3.4 0 V2.6 M9.6 0 V2.6" stroke="#8c8c8c" stroke-width="1.1"/><path d="M2 9 H11.2 M2 11.2 H11.2 M5.4 6 V12.4 M8.4 6 V12.4" stroke="#cfd8d4" stroke-width="0.8"/><rect x="2.2" y="6" width="3" height="2.6" fill="#4c7ad6"/></svg><svg class="ic" style="left:740px;top:3px" width="12" height="15" viewBox="0 0 12 15"><path d="M2.4 12.8 H9.6" stroke="#e4d6d6" stroke-width="1"/><path d="M2.6 3.8 L9 10.4 M9 3.8 L2.6 10.4" stroke="#c9302f" stroke-width="3" stroke-linecap="round"/></svg></div>
<div class="r" style="top:385px;height:20px"><i class="cb"></i><span class="nm">San Jose-Irwell Executive VC 360 Monthly</span><span class="dr">Last Month</span><span class="run hv"><b>Run</b><u></u></span><svg class="ic" style="left:648px;top:3px" width="14" height="15" viewBox="0 0 14 15"><path d="M1.2 0.5 H5.5 L7.2 2.2 V10 H1.2 Z" fill="#d8e9f7" stroke="#7dabd6" stroke-width="1"/><path d="M5 2.7 H10.3 L12.8 5.2 V13.3 H5 Z" fill="#d3e6f6" stroke="#74a4d2" stroke-width="1"/><path d="M10.3 2.7 V5.2 H12.8" fill="#f2f8fd" stroke="#74a4d2" stroke-width="0.7"/><path d="M6.2 4.2 V12" stroke="#f2f8fd" stroke-width="1"/><path d="M0.5 10.9 H4.4 M4.6 14.1 H13.2" stroke="#b9c7d4" stroke-width="0.8" opacity=".7"/></svg><svg class="ic" style="left:678px;top:3px" width="15" height="15" viewBox="0 0 15 15"><path d="M3 13.8 H13" stroke="#d8d8d8" stroke-width="1"/><path d="M0.6 13.2 L1.5 10.9 L11 1.6 L12.6 3.2 L3 12.3 Z" fill="#ecc94a" stroke="#b8982e" stroke-width="0.7"/><path d="M2.3 11.4 L11.6 2.3" stroke="#f8e690" stroke-width="0.7"/><path d="M10.5 2.1 L11.5 1.1 Q12.3 0.5 13 1.2 Q13.7 2 13.1 2.7 L12.1 3.7 Z" fill="#e45a5a"/><path d="M0.6 13.2 L1.3 11.4 L2.4 12.5 Z" fill="#555"/></svg><svg class="ic" style="left:708px;top:3px" width="14" height="15" viewBox="0 0 14 15"><rect x="0.5" y="1" width="12" height="12.2" rx="1" fill="#f1f3f1" stroke="#a58a8a" stroke-width="0.8"/><path d="M0.5 5 V2 Q0.5 1 1.5 1 H11.5 Q12.5 1 12.5 2 V5 Z" fill="#e85a5c"/><path d="M1 2.2 H12" stroke="#f59a9a" stroke-width="0.8"/><path d="M3.4 0 V2.6 M9.6 0 V2.6" stroke="#8c8c8c" stroke-width="1.1"/><path d="M2 9 H11.2 M2 11.2 H11.2 M5.4 6 V12.4 M8.4 6 V12.4" stroke="#cfd8d4" stroke-width="0.8"/><rect x="2.2" y="6" width="3" height="2.6" fill="#4c7ad6"/></svg><svg class="ic" style="left:740px;top:3px" width="12" height="15" viewBox="0 0 12 15"><path d="M2.4 12.8 H9.6" stroke="#e4d6d6" stroke-width="1"/><path d="M2.6 3.8 L9 10.4 M9 3.8 L2.6 10.4" stroke="#c9302f" stroke-width="3" stroke-linecap="round"/></svg></div>
<div class="r o" style="top:405px;height:20px"><i class="cb"><svg viewBox="0 0 11 11"><path d="M2 5.5 L4.3 8.2 L9 1.8" fill="none" stroke="#222" stroke-width="1.6"/></svg></i><span class="nm">MCU Engineering Project: MCU Bandwidth World Last Week</span><span class="dr">Last Week</span><span class="run"><b>Run</b><u></u></span><svg class="ic" style="left:648px;top:3px" width="14" height="15" viewBox="0 0 14 15"><path d="M1.2 0.5 H5.5 L7.2 2.2 V10 H1.2 Z" fill="#d8e9f7" stroke="#7dabd6" stroke-width="1"/><path d="M5 2.7 H10.3 L12.8 5.2 V13.3 H5 Z" fill="#d3e6f6" stroke="#74a4d2" stroke-width="1"/><path d="M10.3 2.7 V5.2 H12.8" fill="#f2f8fd" stroke="#74a4d2" stroke-width="0.7"/><path d="M6.2 4.2 V12" stroke="#f2f8fd" stroke-width="1"/><path d="M0.5 10.9 H4.4 M4.6 14.1 H13.2" stroke="#b9c7d4" stroke-width="0.8" opacity=".7"/></svg><svg class="ic" style="left:678px;top:3px" width="15" height="15" viewBox="0 0 15 15"><path d="M3 13.8 H13" stroke="#d8d8d8" stroke-width="1"/><path d="M0.6 13.2 L1.5 10.9 L11 1.6 L12.6 3.2 L3 12.3 Z" fill="#ecc94a" stroke="#b8982e" stroke-width="0.7"/><path d="M2.3 11.4 L11.6 2.3" stroke="#f8e690" stroke-width="0.7"/><path d="M10.5 2.1 L11.5 1.1 Q12.3 0.5 13 1.2 Q13.7 2 13.1 2.7 L12.1 3.7 Z" fill="#e45a5a"/><path d="M0.6 13.2 L1.3 11.4 L2.4 12.5 Z" fill="#555"/></svg><svg class="ic" style="left:708px;top:3px" width="14" height="15" viewBox="0 0 14 15"><rect x="0.5" y="1" width="12" height="12.2" rx="1" fill="#f1f3f1" stroke="#a58a8a" stroke-width="0.8"/><path d="M0.5 5 V2 Q0.5 1 1.5 1 H11.5 Q12.5 1 12.5 2 V5 Z" fill="#e85a5c"/><path d="M1 2.2 H12" stroke="#f59a9a" stroke-width="0.8"/><path d="M3.4 0 V2.6 M9.6 0 V2.6" stroke="#8c8c8c" stroke-width="1.1"/><path d="M2 9 H11.2 M2 11.2 H11.2 M5.4 6 V12.4 M8.4 6 V12.4" stroke="#cfd8d4" stroke-width="0.8"/><rect x="2.2" y="6" width="3" height="2.6" fill="#4c7ad6"/></svg><svg class="ic" style="left:740px;top:3px" width="12" height="15" viewBox="0 0 12 15"><path d="M2.4 12.8 H9.6" stroke="#e4d6d6" stroke-width="1"/><path d="M2.6 3.8 L9 10.4 M9 3.8 L2.6 10.4" stroke="#c9302f" stroke-width="3" stroke-linecap="round"/></svg></div>
<div class="r" style="top:425px;height:20px"><i class="cb"></i><span class="nm" style="line-height:20px">Service Manager VC360 QoS Daily</span><span class="dr" style="line-height:20px">Yesterday</span><span class="run"><b>Run</b><u></u></span><svg class="ic" style="left:648px;top:3px" width="14" height="15" viewBox="0 0 14 15"><path d="M1.2 0.5 H5.5 L7.2 2.2 V10 H1.2 Z" fill="#d8e9f7" stroke="#7dabd6" stroke-width="1"/><path d="M5 2.7 H10.3 L12.8 5.2 V13.3 H5 Z" fill="#d3e6f6" stroke="#74a4d2" stroke-width="1"/><path d="M10.3 2.7 V5.2 H12.8" fill="#f2f8fd" stroke="#74a4d2" stroke-width="0.7"/><path d="M6.2 4.2 V12" stroke="#f2f8fd" stroke-width="1"/><path d="M0.5 10.9 H4.4 M4.6 14.1 H13.2" stroke="#b9c7d4" stroke-width="0.8" opacity=".7"/></svg><svg class="ic" style="left:678px;top:3px" width="15" height="15" viewBox="0 0 15 15"><path d="M3 13.8 H13" stroke="#d8d8d8" stroke-width="1"/><path d="M0.6 13.2 L1.5 10.9 L11 1.6 L12.6 3.2 L3 12.3 Z" fill="#ecc94a" stroke="#b8982e" stroke-width="0.7"/><path d="M2.3 11.4 L11.6 2.3" stroke="#f8e690" stroke-width="0.7"/><path d="M10.5 2.1 L11.5 1.1 Q12.3 0.5 13 1.2 Q13.7 2 13.1 2.7 L12.1 3.7 Z" fill="#e45a5a"/><path d="M0.6 13.2 L1.3 11.4 L2.4 12.5 Z" fill="#555"/></svg><svg class="ic" style="left:708px;top:3px" width="14" height="15" viewBox="0 0 14 15"><rect x="0.5" y="1" width="12" height="12.2" rx="1" fill="#f1f3f1" stroke="#a58a8a" stroke-width="0.8"/><path d="M0.5 5 V2 Q0.5 1 1.5 1 H11.5 Q12.5 1 12.5 2 V5 Z" fill="#e85a5c"/><path d="M1 2.2 H12" stroke="#f59a9a" stroke-width="0.8"/><path d="M3.4 0 V2.6 M9.6 0 V2.6" stroke="#8c8c8c" stroke-width="1.1"/><path d="M2 9 H11.2 M2 11.2 H11.2 M5.4 6 V12.4 M8.4 6 V12.4" stroke="#cfd8d4" stroke-width="0.8"/><rect x="2.2" y="6" width="3" height="2.6" fill="#4c7ad6"/></svg><svg class="ic" style="left:740px;top:3px" width="12" height="15" viewBox="0 0 12 15"><path d="M2.4 12.8 H9.6" stroke="#e4d6d6" stroke-width="1"/><path d="M2.6 3.8 L9 10.4 M9 3.8 L2.6 10.4" stroke="#c9302f" stroke-width="3" stroke-linecap="round"/></svg></div>
<div class="r o" style="top:445px;height:20px"><i class="cb"></i><span class="nm" style="line-height:20px">Service Manager VC360 Non-QoS Daily</span><span class="dr" style="line-height:20px">Yesterday</span><span class="run"><b>Run</b><u></u></span><svg class="ic" style="left:648px;top:3px" width="14" height="15" viewBox="0 0 14 15"><path d="M1.2 0.5 H5.5 L7.2 2.2 V10 H1.2 Z" fill="#d8e9f7" stroke="#7dabd6" stroke-width="1"/><path d="M5 2.7 H10.3 L12.8 5.2 V13.3 H5 Z" fill="#d3e6f6" stroke="#74a4d2" stroke-width="1"/><path d="M10.3 2.7 V5.2 H12.8" fill="#f2f8fd" stroke="#74a4d2" stroke-width="0.7"/><path d="M6.2 4.2 V12" stroke="#f2f8fd" stroke-width="1"/><path d="M0.5 10.9 H4.4 M4.6 14.1 H13.2" stroke="#b9c7d4" stroke-width="0.8" opacity=".7"/></svg><svg class="ic" style="left:678px;top:3px" width="15" height="15" viewBox="0 0 15 15"><path d="M3 13.8 H13" stroke="#d8d8d8" stroke-width="1"/><path d="M0.6 13.2 L1.5 10.9 L11 1.6 L12.6 3.2 L3 12.3 Z" fill="#ecc94a" stroke="#b8982e" stroke-width="0.7"/><path d="M2.3 11.4 L11.6 2.3" stroke="#f8e690" stroke-width="0.7"/><path d="M10.5 2.1 L11.5 1.1 Q12.3 0.5 13 1.2 Q13.7 2 13.1 2.7 L12.1 3.7 Z" fill="#e45a5a"/><path d="M0.6 13.2 L1.3 11.4 L2.4 12.5 Z" fill="#555"/></svg><svg class="ic" style="left:708px;top:3px" width="14" height="15" viewBox="0 0 14 15"><rect x="0.5" y="1" width="12" height="12.2" rx="1" fill="#f1f3f1" stroke="#a58a8a" stroke-width="0.8"/><path d="M0.5 5 V2 Q0.5 1 1.5 1 H11.5 Q12.5 1 12.5 2 V5 Z" fill="#e85a5c"/><path d="M1 2.2 H12" stroke="#f59a9a" stroke-width="0.8"/><path d="M3.4 0 V2.6 M9.6 0 V2.6" stroke="#8c8c8c" stroke-width="1.1"/><path d="M2 9 H11.2 M2 11.2 H11.2 M5.4 6 V12.4 M8.4 6 V12.4" stroke="#cfd8d4" stroke-width="0.8"/><rect x="2.2" y="6" width="3" height="2.6" fill="#4c7ad6"/></svg><svg class="ic" style="left:740px;top:3px" width="12" height="15" viewBox="0 0 12 15"><path d="M2.4 12.8 H9.6" stroke="#e4d6d6" stroke-width="1"/><path d="M2.6 3.8 L9 10.4 M9 3.8 L2.6 10.4" stroke="#c9302f" stroke-width="3" stroke-linecap="round"/></svg></div>
<div class="r h2" style="top:465px;height:20px"><i class="cb"></i><span class="nm" style="line-height:20px">Seattle Region Executive VC360 Monthly1</span><span class="dr" style="line-height:20px">Last Month</span><span class="run"><b>Run</b><u></u></span><svg class="ic" style="left:648px;top:3px" width="14" height="15" viewBox="0 0 14 15"><path d="M1.2 0.5 H5.5 L7.2 2.2 V10 H1.2 Z" fill="#d8e9f7" stroke="#7dabd6" stroke-width="1"/><path d="M5 2.7 H10.3 L12.8 5.2 V13.3 H5 Z" fill="#d3e6f6" stroke="#74a4d2" stroke-width="1"/><path d="M10.3 2.7 V5.2 H12.8" fill="#f2f8fd" stroke="#74a4d2" stroke-width="0.7"/><path d="M6.2 4.2 V12" stroke="#f2f8fd" stroke-width="1"/><path d="M0.5 10.9 H4.4 M4.6 14.1 H13.2" stroke="#b9c7d4" stroke-width="0.8" opacity=".7"/></svg><svg class="ic" style="left:678px;top:3px" width="15" height="15" viewBox="0 0 15 15"><path d="M3 13.8 H13" stroke="#d8d8d8" stroke-width="1"/><path d="M0.6 13.2 L1.5 10.9 L11 1.6 L12.6 3.2 L3 12.3 Z" fill="#ecc94a" stroke="#b8982e" stroke-width="0.7"/><path d="M2.3 11.4 L11.6 2.3" stroke="#f8e690" stroke-width="0.7"/><path d="M10.5 2.1 L11.5 1.1 Q12.3 0.5 13 1.2 Q13.7 2 13.1 2.7 L12.1 3.7 Z" fill="#e45a5a"/><path d="M0.6 13.2 L1.3 11.4 L2.4 12.5 Z" fill="#555"/></svg><svg class="ic" style="left:708px;top:3px" width="14" height="15" viewBox="0 0 14 15"><rect x="0.5" y="1" width="12" height="12.2" rx="1" fill="#f1f3f1" stroke="#a58a8a" stroke-width="0.8"/><path d="M0.5 5 V2 Q0.5 1 1.5 1 H11.5 Q12.5 1 12.5 2 V5 Z" fill="#e85a5c"/><path d="M1 2.2 H12" stroke="#f59a9a" stroke-width="0.8"/><path d="M3.4 0 V2.6 M9.6 0 V2.6" stroke="#8c8c8c" stroke-width="1.1"/><path d="M2 9 H11.2 M2 11.2 H11.2 M5.4 6 V12.4 M8.4 6 V12.4" stroke="#cfd8d4" stroke-width="0.8"/><rect x="2.2" y="6" width="3" height="2.6" fill="#4c7ad6"/></svg><svg class="ic" style="left:740px;top:3px" width="12" height="15" viewBox="0 0 12 15"><path d="M2.4 12.8 H9.6" stroke="#e4d6d6" stroke-width="1"/><path d="M2.6 3.8 L9 10.4 M9 3.8 L2.6 10.4" stroke="#c9302f" stroke-width="3" stroke-linecap="round"/></svg></div>
<div class="r o" style="top:485px;height:20px"></div>
<div class="r" style="top:505px;height:21px"></div>
<div class="r o" style="top:526px;height:20px"></div>
<div class="r" style="top:546px;height:20px"></div>
<div class="r o" style="top:566px;height:20px"></div>
<div class="r" style="top:586px;height:20px"></div>
<div class="r o" style="top:606px;height:20px"></div>
<div class="r" style="top:626px;height:20px"></div>
<div class="r o" style="top:646px;height:20px"></div>
<div class="r" style="top:666px;height:20px"></div>
<div class="r o" style="top:686px;height:20px"></div>
<div class="r" style="top:706px;height:20px"></div>
<div class="r o" style="top:726px;height:20px"></div>
<div class="r" style="top:746px;height:20px"></div>
<div class="r o" style="top:766px;height:13px"></div>
</div>
<div id="pbar"></div>
<div id="panel"></div>
<div id="ptitle">Preview</div>
<div class="sh" style="top:204px">Saved Report Detailes</div>
<div class="th" style="top:224px"><span style="left:5px">Parameter</span><span style="left:81px">Value</span><i style="left:75px"></i></div>
<div class="pr g" style="top:243px;height:31px"><span class="k">Name</span><span class="v">MCU Engineering Project: MCU Bandwidth World Last<br>Week</span></div>
<div class="pr" style="top:274px;height:31px"><span class="k">Description</span><span class="v">MCU Engineering Project: MCU Bandwidth World Last<br>Week</span></div>
<div class="pr g" style="top:305px;height:31px"><span class="k">Template</span><span class="v">24-hour Videoconference Bandwidth Profile - Average,<br>Max and Min</span></div>
<div class="pr" style="top:336px;height:18px"><span class="k">Exclude internal</span><span class="v">false</span></div>
<div class="pr g" style="top:354px;height:19px"><span class="k">Date range</span><span class="v">Last Week</span></div>
<div class="pr" style="top:373px;height:19px"><span class="k">Hierarchy</span><span class="v">Jim's New One</span></div>
<div class="sh" style="top:392px">Endpoint/Regions</div>
<div class="pill" style="left:800px;width:151px;border-radius:0 5px 5px 0">All&gt;World&gt;QoS Managed&gt;<b>MCU</b></div>
<div class="abs" style="left:951px;top:424px;width:4px;height:1px;background:#ccc"></div>
<div class="pill" style="left:954px;width:151px;border-radius:5px 0 0 5px;padding-left:4px">All&gt;<b>World</b></div>
<div class="sh" style="top:438px">Schedules</div>
<div class="th" style="top:458px"><span style="left:5px">Job Name</span><span style="left:173px">Schedule</span><span style="left:218px">Next run</span><span style="left:263px">Status</span><i style="left:167px"></i><i style="left:213px"></i><i style="left:257px"></i></div>
<div class="pr" style="top:477px;height:21px;border-bottom:1px solid #ddd"><span class="k" style="top:4px;width:160px;overflow:hidden">MCU Engineering Project: MCU Bandwidth</span><span class="v" style="left:173px;top:4px">now</span></div>
<div class="abs" style="left:777px;top:475px;width:5px;height:13px;background:repeating-linear-gradient(90deg,#aaa 0,#aaa 1px,#fff 1px,#fff 2px)"></div>
<div class="abs" style="left:787px;top:478px;border:3px solid transparent;border-left:5px solid #999;border-right:0"></div>

<svg class="abs" style="left:1073px;top:782px" width="40" height="25" viewBox="0 0 40 25" shape-rendering="crispEdges"><rect x="5" y="0" width="5" height="5" fill="#f4f4f4"/><rect x="10" y="0" width="5" height="5" fill="#f8f8f8"/><rect x="25" y="0" width="5" height="5" fill="#f4f4f4"/><rect x="0" y="5" width="5" height="5" fill="#e8e8e8"/><rect x="5" y="5" width="5" height="5" fill="#a8a8a8"/><rect x="10" y="5" width="5" height="5" fill="#b8b8b8"/><rect x="15" y="5" width="5" height="5" fill="#eeeeee"/><rect x="20" y="5" width="5" height="5" fill="#c8c8c8"/><rect x="25" y="5" width="5" height="5" fill="#b0b0b0"/><rect x="30" y="5" width="5" height="5" fill="#c8c8c8"/><rect x="35" y="5" width="5" height="5" fill="#f4f4f4"/><rect x="0" y="10" width="5" height="5" fill="#e8e8e8"/><rect x="5" y="10" width="5" height="5" fill="#d4d4d4"/><rect x="10" y="10" width="5" height="5" fill="#e0e0e0"/><rect x="15" y="10" width="5" height="5" fill="#ececec"/><rect x="20" y="10" width="5" height="5" fill="#eeeeee"/><rect x="25" y="10" width="5" height="5" fill="#d4d4d4"/><rect x="30" y="10" width="5" height="5" fill="#dcdcdc"/><rect x="35" y="10" width="5" height="5" fill="#f4f4f4"/><rect x="0" y="15" width="5" height="5" fill="#e8e8e8"/><rect x="5" y="15" width="5" height="5" fill="#c4c4c4"/><rect x="10" y="15" width="5" height="5" fill="#b4b4b4"/><rect x="15" y="15" width="5" height="5" fill="#b4b4b4"/><rect x="20" y="15" width="5" height="5" fill="#b4b4b4"/><rect x="25" y="15" width="5" height="5" fill="#a8a8a8"/><rect x="30" y="15" width="5" height="5" fill="#c4c4c4"/><rect x="0" y="20" width="5" height="5" fill="#f8f8f8"/><rect x="5" y="20" width="5" height="5" fill="#c4c4c4"/><rect x="10" y="20" width="5" height="5" fill="#d4d4d4"/><rect x="15" y="20" width="5" height="5" fill="#d0d0d0"/><rect x="20" y="20" width="5" height="5" fill="#c8c8c8"/><rect x="25" y="20" width="5" height="5" fill="#c8c8c8"/><rect x="30" y="20" width="5" height="5" fill="#e8e8e8"/></svg>
<div class="abs" style="left:16px;top:782px;font-size:7.4px;line-height:10px;color:#9a9a9a;white-space:nowrap">Powered by</div>
<div class="abs" style="left:58px;top:783px;width:11px;height:8px;background:#2b9be0;border-radius:1px"></div>
<div class="abs" style="left:60px;top:791px;border:2px solid transparent;border-top:2px solid #2b9be0;border-bottom:0;border-left-width:0"></div>
<div class="abs" style="left:59px;top:782px;font:bold italic 6px 'Liberation Sans',sans-serif;line-height:10px;color:#bfe2f7;letter-spacing:-.3px">you</div>
<div class="abs" style="left:69px;top:781px;font:bold 8px 'Liberation Sans',sans-serif;line-height:11px;color:#1f93dc;white-space:nowrap;letter-spacing:-.1px">designet</div>

<svg class="abs" style="left:204px;top:146px" width="12" height="20" viewBox="0 0 12 20"><path d="M1.2 1.2 V15.6 L4.4 12.6 L6.9 18.4 L9 17.5 L6.6 11.9 H10.9 Z" fill="#fff" stroke="#111" stroke-width="1"/></svg>
<svg class="abs" style="left:190px;top:171px" width="12" height="20" viewBox="0 0 12 20"><path d="M1.2 1.2 V15.6 L4.4 12.6 L6.9 18.4 L9 17.5 L6.6 11.9 H10.9 Z" fill="#fff" stroke="#111" stroke-width="1"/></svg>
<svg class="abs" style="left:21px;top:313px" width="12" height="20" viewBox="0 0 12 20"><path d="M1.2 1.2 V15.6 L4.4 12.6 L6.9 18.4 L9 17.5 L6.6 11.9 H10.9 Z" fill="#000" stroke="#000" stroke-width="1"/></svg>
<svg class="abs" style="left:624px;top:395px" width="12" height="20" viewBox="0 0 12 20"><path d="M1.2 1.2 V15.6 L4.4 12.6 L6.9 18.4 L9 17.5 L6.6 11.9 H10.9 Z" fill="#fff" stroke="#111" stroke-width="1"/></svg>
<svg class="abs" style="left:21px;top:472px" width="12" height="20" viewBox="0 0 12 20"><path d="M1.2 1.2 V15.6 L4.4 12.6 L6.9 18.4 L9 17.5 L6.6 11.9 H10.9 Z" fill="#fff" stroke="#111" stroke-width="1"/></svg>

</div>
</div>
</body></html>
